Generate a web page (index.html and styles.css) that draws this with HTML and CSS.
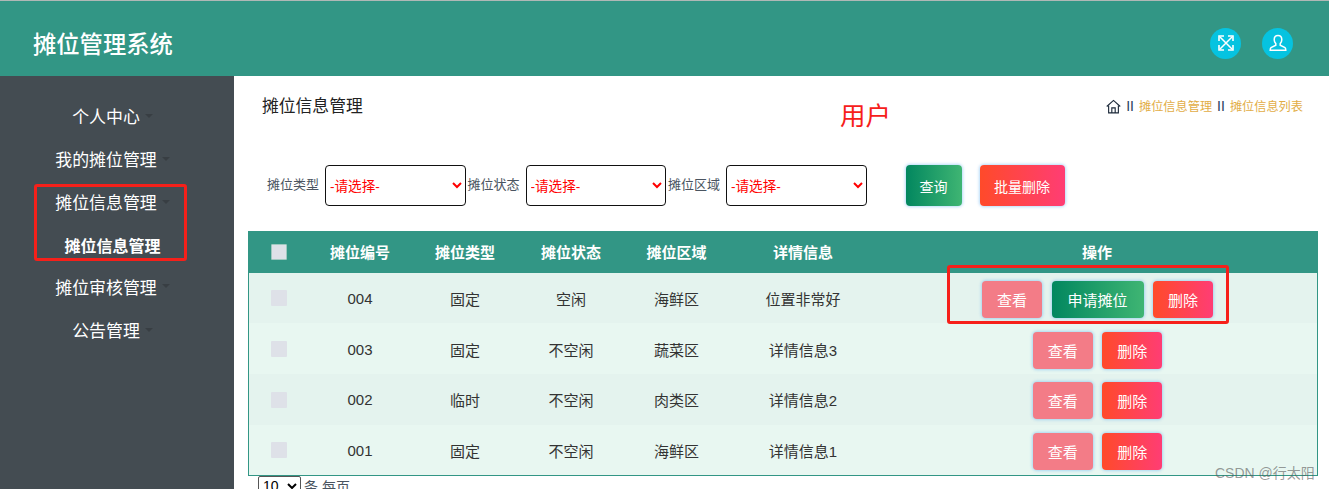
FILE: index.html
```html
<!DOCTYPE html>
<html lang="zh-CN">
<head>
<meta charset="utf-8">
<title>摊位管理系统</title>
<link rel="stylesheet" href="styles.css">
</head>
<body>
<header class="topbar">
  <h1 class="brand">摊位管理系统</h1>
  <div class="top-actions">
    <button class="round-btn" type="button" aria-label="全屏">
      <svg viewBox="0 0 18 18" width="18" height="18" fill="none" stroke="#fff" stroke-width="1.5">
        <path d="M3 3l12 12M15 3L3 15"/>
        <path d="M2 7V2h5M11 2h5v5M16 11v5h-5M7 16H2v-5" stroke-width="1.6"/>
      </svg>
    </button>
    <button class="round-btn" type="button" aria-label="用户">
      <svg viewBox="0 0 18 18" width="18" height="18" fill="none" stroke="#fff" stroke-width="1.5">
        <path d="M9 1.500c-2.400 0-3.800 1.800-3.800 4.200 0 1.700.7 3 1.600 3.900v1.600L2 13.600c-.6.4-.8.9-.8 2.600h15.600c0-1.700-.2-2.200-.8-2.600l-4.800-2.400V9.600c.9-.9 1.600-2.200 1.600-3.900C12.800 3.300 11.400 1.500 9 1.500z"/>
      </svg>
    </button>
  </div>
</header>

<div class="shell">
  <nav class="sidebar">
    <ul class="menu">
      <li class="menu-item"><span>个人中心</span><i class="caret"></i></li>
      <li class="menu-item"><span>我的摊位管理</span><i class="caret"></i></li>
      <li class="menu-item"><span>摊位信息管理</span><i class="caret"></i></li>
      <li class="menu-sub">摊位信息管理</li>
      <li class="menu-item"><span>摊位审核管理</span><i class="caret"></i></li>
      <li class="menu-item"><span>公告管理</span><i class="caret"></i></li>
    </ul>
  </nav>

  <main class="content">
    <div class="page-head">
      <h2 class="page-title">摊位信息管理</h2>
      <div class="crumbs">
        <svg class="home" viewBox="0 0 16 16" width="15" height="15" fill="none" stroke="#1d2a3a" stroke-width="1.200">
          <path d="M.8 8L8 1.500 15.200 8"/>
          <path d="M2.800 6.800v8h10.400v-8"/>
          <path d="M6.200 14.800V9.500h3.600v5.300"/>
        </svg>
        <span class="sep">II</span>
        <a class="crumb">摊位信息管理</a>
        <span class="sep">II</span>
        <a class="crumb">摊位信息列表</a>
      </div>
    </div>

    <form class="filters">
      <label class="filter-label">摊位类型</label>
      <select class="filter-select"><option>-请选择-</option></select>
      <label class="filter-label">摊位状态</label>
      <select class="filter-select"><option>-请选择-</option></select>
      <label class="filter-label">摊位区域</label>
      <select class="filter-select"><option>-请选择-</option></select>
      <button class="btn btn-green btn-query" type="button">查询</button>
      <button class="btn btn-red btn-batch" type="button">批量删除</button>
    </form>

    <table class="grid">
      <colgroup>
        <col class="c-check"><col class="c-no"><col class="c-type"><col class="c-state"><col class="c-area"><col class="c-info"><col class="c-ops">
      </colgroup>
      <thead>
        <tr>
          <th><input class="check check-head" type="checkbox"></th>
          <th>摊位编号</th><th>摊位类型</th><th>摊位状态</th><th>摊位区域</th><th>详情信息</th><th>操作</th>
        </tr>
      </thead>
      <tbody>
        <tr class="row-a">
          <td><input class="check" type="checkbox"></td>
          <td>004</td><td>固定</td><td>空闲</td><td>海鲜区</td><td>位置非常好</td>
          <td><div class="ops"><button class="btn btn-pink" type="button">查看</button><button class="btn btn-green btn-wide" type="button">申请摊位</button><button class="btn btn-red" type="button">删除</button></div></td>
        </tr>
        <tr class="row-b">
          <td><input class="check" type="checkbox"></td>
          <td>003</td><td>固定</td><td>不空闲</td><td>蔬菜区</td><td>详情信息3</td>
          <td><div class="ops"><button class="btn btn-pink" type="button">查看</button><button class="btn btn-red" type="button">删除</button></div></td>
        </tr>
        <tr class="row-a">
          <td><input class="check" type="checkbox"></td>
          <td>002</td><td>临时</td><td>不空闲</td><td>肉类区</td><td>详情信息2</td>
          <td><div class="ops"><button class="btn btn-pink" type="button">查看</button><button class="btn btn-red" type="button">删除</button></div></td>
        </tr>
        <tr class="row-b">
          <td><input class="check" type="checkbox"></td>
          <td>001</td><td>固定</td><td>不空闲</td><td>海鲜区</td><td>详情信息1</td>
          <td><div class="ops"><button class="btn btn-pink" type="button">查看</button><button class="btn btn-red" type="button">删除</button></div></td>
        </tr>
      </tbody>
    </table>

    <div class="pager">
      <select class="page-size"><option>10</option></select>
      <span>条 每页</span>
    </div>
  </main>
</div>

<!-- hand-drawn markup layer -->
<div class="mark mark-menu"></div>
<div class="mark mark-ops"></div>
<div class="role-note">用户</div>
<div class="watermark">CSDN @行太阳</div>
</body>
</html>
```
FILE: styles.css
```css
* { box-sizing: border-box; }

html, body {
  margin: 0;
  height: 489px;
  overflow: hidden;
  background: #fff;
  font-family: "Liberation Sans", "Noto Sans CJK SC", sans-serif;
  color: #333;
}

.topbar {
  height: 76px;
  background: #329685;
  border-top: 1px solid #b0b8b6;
  display: flex;
  align-items: center;
  justify-content: space-between;
  padding: 9px 36px 0 33px;
}

.brand {
  margin: 0;
  font-size: 23.300px;
  font-weight: 500;
  color: #fff;
}

.top-actions { display: flex; gap: 21px; }

.round-btn {
  width: 31px;
  height: 31px;
  padding: 0;
  border: 0;
  border-radius: 50%;
  background: #06c3e0;
  display: flex;
  align-items: center;
  justify-content: center;
}

.shell { display: flex; height: 413px; }

.sidebar {
  width: 234px;
  flex: none;
  background: #444c52;
  padding: 18px 9px 0 0;
}

.menu {
  list-style: none;
  margin: 0;
  padding: 0;
  display: flex;
  flex-direction: column;
  align-items: center;
}

.menu-item, .menu-sub {
  height: 43.200px;
  display: flex;
  align-items: center;
  color: #fff;
  font-size: 16.900px;
}

.menu-sub { font-size: 16px; font-weight: 700; margin-bottom: -2px; }

.caret {
  width: 0;
  height: 0;
  margin-left: 5px;
  border: 4px solid transparent;
  border-top: 4px solid #383e43;
  border-bottom: 0;
}

.content {
  flex: 1;
  min-width: 0;
  padding: 0 11px 0 14px;
  font-size: 15px;
}

.page-head {
  display: flex;
  justify-content: space-between;
  align-items: flex-start;
  height: 89px;
  padding: 19px 15px 0 14px;
}

.page-title {
  margin: 0;
  font-size: 16.800px;
  line-height: 24px;
  font-weight: 400;
  color: #222;
}

.crumbs {
  display: flex;
  align-items: center;
  gap: 5px;
  height: 22px;
  font-size: 12.200px;
}

.sep { color: #26405e; font-size: 14px; }
.crumb { color: #e2ad46; }

.filters {
  height: 66px;
  display: flex;
  align-items: flex-start;
  padding-left: 19px;
}

.filter-label {
  width: 59px;
  height: 41px;
  line-height: 40px;
  font-size: 13px;
  color: #4a5460;
  white-space: nowrap;
}
.filter-label + .filter-select { margin-left: -1px; }

.filter-select {
  width: 140.500px;
  height: 41px;
  margin-right: 2px;
  padding: 2px 0 0;
  background: #fff;
  border: 1px solid #111;
  border-radius: 4px;
  color: #f00;
  font-family: inherit;
  font-size: 13.600px;
}

.btn {
  width: 60px;
  height: 37px;
  padding: 0;
  border: 0;
  border-radius: 4px;
  color: #fff;
  font-family: inherit;
  font-size: 15px;
  box-shadow: 0 0 3px 1px rgba(96, 176, 240, .45);
  white-space: nowrap;
}

.btn-pink { background: #f37c87; }
.btn-green { background: linear-gradient(90deg, #02875f, #3fb573); }
.btn-red { background: linear-gradient(90deg, #ff4a2a, #ff3d74); }
.btn-wide { width: 92px; }

.btn-query, .btn-batch { height: 41px; font-size: 14px; }
.btn-query { width: 56px; margin-left: 37px; }
.btn-batch { width: 85px; margin-left: 18px; }

.grid {
  width: 1070px;
  table-layout: fixed;
  border-collapse: collapse;
  border: 1px solid #329685;
  text-align: center;
}

.c-check { width: 59.500px; }
.c-no { width: 104px; }
.c-type, .c-state { width: 106px; }
.c-area { width: 105px; }
.c-info { width: 148px; }

.grid th {
  height: 41px;
  padding: 0 0 1px;
  background: #329685;
  color: #fff;
  font-size: 15px;
  font-weight: 700;
}

.grid td { height: 50.750px; padding: 1px 0 0; color: #333; }

.row-a { background: #e4f3ee; }
.row-b { background: #e8f7f1; }

.check {
  display: block;
  width: 16px;
  height: 16px;
  margin: 0 auto;
  appearance: none;
  background: #dee1e8;
  border: 0;
  border-radius: 1px;
}

.check-head { border: 1px solid #9fc9c0; }

.ops {
  display: flex;
  justify-content: center;
  gap: 9.500px;
  padding: 2px 0 0 1px;
}

.pager {
  display: flex;
  align-items: center;
  gap: 3px;
  height: 20px;
  padding-left: 10px;
  font-size: 14px;
  color: #4a5460;
}

.page-size {
  width: 43px;
  height: 20px;
  padding: 0;
  font-size: 14px;
  font-family: inherit;
  background: #fff;
  border: 1px solid #555;
  border-radius: 2px;
}

.mark {
  position: absolute;
  border: 3px solid #f6201a;
  border-radius: 3px;
}
.mark-menu { left: 34px; top: 184px; width: 153px; height: 77px; }
.mark-ops { left: 947px; top: 265px; width: 282px; height: 59px; }

.role-note {
  position: absolute;
  left: 840px;
  top: 99px;
  font-size: 25.500px;
  line-height: 34px;
  color: #f6201a;
}

.watermark {
  position: absolute;
  left: 1215px;
  top: 463px;
  font-size: 14px;
  line-height: 20px;
  color: rgba(90, 90, 90, .62);
}
```
